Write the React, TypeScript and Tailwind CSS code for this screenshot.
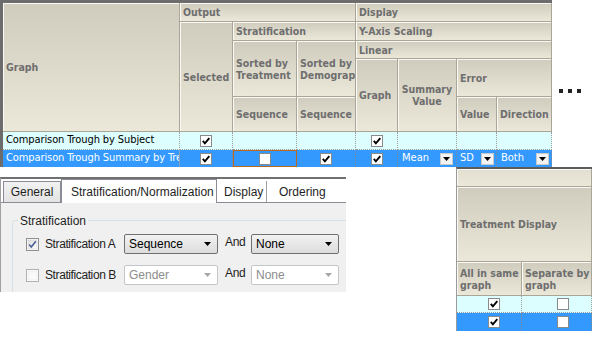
import React from "react";

const H =
  "border-r border-b border-[#a9a698] bg-linear-to-b from-[#cfccbd] to-[#ece8d9] shadow-[inset_1px_1px_0_#faf9f3] text-[10.5px] font-bold text-[#6e6e6e] px-[3px] flex items-center leading-[12px] overflow-hidden whitespace-nowrap";

function GridCheck({ checked }: { checked: boolean }) {
  return (
    <svg width="12" height="12" viewBox="0 0 12 12">
      <rect x="0.5" y="0.5" width="11" height="11" fill="#fff" stroke="#8a8a8a" />
      {checked && <path d="M2.8 5.8 L4.9 8.3 L9.3 3.2" fill="none" stroke="#000" strokeWidth="1.9" />}
    </svg>
  );
}

function DropBtn() {
  return (
    <span className="w-[13px] h-[12px] bg-[#f4f4f4] border border-[#c9c9c9] flex items-center justify-center">
      <svg width="7" height="4" viewBox="0 0 7 4">
        <path d="M0 0H7L3.5 4Z" fill="#000" />
      </svg>
    </span>
  );
}

const D1 = "bg-[#dcfefe] border-r border-dotted border-[#9c9c9c] border-b flex items-center justify-center";
const D2 = "bg-[#3399ff] border-r border-dotted border-[#7a8aa0] flex items-center justify-center";

function Grid() {
  return (
    <div className="border-l-[3px] border-t-[3px] border-[#6c6c6c] grid grid-cols-[177px_53px_64px_59px_42px_59px_40px_55px] grid-rows-[19px_19px_18px_38px_35px_18px_17px]">
      <div className={`${H} col-start-1 row-start-1 row-end-6`}>Graph</div>
      <div className={`${H} col-start-2 col-end-5 row-start-1`}>Output</div>
      <div className={`${H} col-start-5 col-end-9 row-start-1`}>Display</div>
      <div className={`${H} col-start-2 row-start-2 row-end-6`}>Selected</div>
      <div className={`${H} col-start-3 col-end-5 row-start-2`}>Stratification</div>
      <div className={`${H} col-start-5 col-end-9 row-start-2`}>Y-Axis Scaling</div>
      <div className={`${H} col-start-3 row-start-3 row-end-5`}>
        <span>
          Sorted by
          <br />
          Treatment
        </span>
      </div>
      <div className={`${H} col-start-4 row-start-3 row-end-5`}>
        <span>
          Sorted by
          <br />
          Demographics
        </span>
      </div>
      <div className={`${H} col-start-5 col-end-9 row-start-3`}>Linear</div>
      <div className={`${H} col-start-5 row-start-4 row-end-6`}>Graph</div>
      <div className={`${H} col-start-6 row-start-4 row-end-6 justify-center text-center`}>
        <span>
          Summary
          <br />
          Value
        </span>
      </div>
      <div className={`${H} col-start-7 col-end-9 row-start-4`}>Error</div>
      <div className={`${H} col-start-3 row-start-5`}>Sequence</div>
      <div className={`${H} col-start-4 row-start-5`}>Sequence</div>
      <div className={`${H} col-start-7 row-start-5`}>Value</div>
      <div className={`${H} col-start-8 row-start-5`}>Direction</div>

      {/* data row 1 */}
      <div className="row-start-6 col-start-1 bg-[#dcfefe] border-r border-[#a0a0a0] border-b border-b-[#9c9c9c] border-dotted px-[3px] flex items-center text-[11px] tracking-[-0.1px] text-black whitespace-nowrap overflow-hidden">
        Comparison Trough by Subject
      </div>
      <div className={`${D1} row-start-6 col-start-2`}>
        <GridCheck checked />
      </div>
      <div className={`${D1} row-start-6 col-start-3`} />
      <div className={`${D1} row-start-6 col-start-4`} />
      <div className={`${D1} row-start-6 col-start-5`}>
        <GridCheck checked />
      </div>
      <div className={`${D1} row-start-6 col-start-6`} />
      <div className={`${D1} row-start-6 col-start-7`} />
      <div className={`${D1} row-start-6 col-start-8`} />

      {/* data row 2 */}
      <div className="row-start-7 col-start-1 bg-[#3399ff] border-r border-[#8aa0b8] px-[3px] flex items-center text-[11px] tracking-[-0.1px] text-white whitespace-nowrap overflow-hidden">
        Comparison Trough Summary by Treatment
      </div>
      <div className={`${D2} row-start-7 col-start-2`}>
        <GridCheck checked />
      </div>
      <div className="row-start-7 col-start-3 bg-[#3399ff] border border-[#b8691f] flex items-center justify-center">
        <GridCheck checked={false} />
      </div>
      <div className={`${D2} row-start-7 col-start-4`}>
        <GridCheck checked />
      </div>
      <div className={`${D2} row-start-7 col-start-5`}>
        <GridCheck checked />
      </div>
      <div className={`${D2} row-start-7 col-start-6 !justify-between pl-[4px] pr-[3px] text-[11px] text-white`}>
        <span>Mean</span>
        <DropBtn />
      </div>
      <div className={`${D2} row-start-7 col-start-7 !justify-between pl-[3px] pr-[2px] text-[11px] text-white`}>
        <span>SD</span>
        <DropBtn />
      </div>
      <div className={`${D2} row-start-7 col-start-8 !justify-between pl-[4px] pr-[2px] text-[11px] text-white`}>
        <span>Both</span>
        <DropBtn />
      </div>
    </div>
  );
}

function WinCheck({ checked, disabled }: { checked: boolean; disabled?: boolean }) {
  return (
    <svg width="13" height="13" viewBox="0 0 13 13">
      <defs>
        <linearGradient id={disabled ? "cbd" : "cbe"} x1="0" y1="0" x2="1" y2="1">
          <stop offset="0" stopColor={disabled ? "#f4f4f4" : "#dcdcdc"} />
          <stop offset="1" stopColor="#ffffff" />
        </linearGradient>
      </defs>
      <rect x="0.5" y="0.5" width="12" height="12" fill="#fff" stroke={disabled ? "#b1b1b1" : "#8e8f8f"} />
      <rect x="2" y="2" width="9" height="9" fill={`url(#${disabled ? "cbd" : "cbe"})`} stroke={disabled ? "#e2e2e2" : "#c9cbd0"} strokeWidth="0.5" />
      {checked && <path d="M3.2 6.5 L5.3 9 L9.8 3.3" fill="none" stroke="#4a5f97" strokeWidth="1.6" />}
    </svg>
  );
}

function Combo({ text, disabled, w }: { text: string; disabled?: boolean; w: string }) {
  return (
    <div
      className={`${w} h-[20px] rounded-[2px] border flex items-center justify-between pl-[4px] pr-[6px] text-[12px] ${
        disabled
          ? "border-[#c2c6c9] bg-white text-[#8d8d8d]"
          : "border-[#707070] bg-linear-to-b from-[#f2f2f2] to-[#dcdcdc] text-black"
      }`}
    >
      <span>{text}</span>
      <svg width="7" height="4" viewBox="0 0 7 4">
        <path d="M0 0H7L3.5 4Z" fill={disabled ? "#a6a6a6" : "#000"} />
      </svg>
    </div>
  );
}

function TabPanel() {
  return (
    <div className="mt-[10px] w-[346px] h-[115px] flex flex-col border-t-2 border-t-[#707070] border-l border-l-[#a0a0a0] bg-white font-['Liberation_Sans',sans-serif] text-[12px] overflow-hidden">
      <div className="h-[23px] flex items-end shrink-0 text-[12px]">
        <div className="ml-[2px] w-[58px] h-[21px] border border-b-0 border-[#898c95] bg-linear-to-b from-[#f2f2f2] to-[#e3e3e3] flex items-center justify-center text-[#1e1e1e]">
          General
        </div>
        <div className="w-[156px] h-[24px] -mb-px border border-b-0 border-[#898c95] bg-white flex items-center pl-[9px] text-[#1e1e1e] relative z-10">
          Stratification/Normalization
        </div>
        <div className="w-[50px] h-[21px] border-r border-[#a0a0a0] flex items-center pl-[7px] text-[#1e1e1e]">
          Display
        </div>
        <div className="flex-1 h-[21px] flex items-center pl-[12px] text-[#1e1e1e]">Ordering</div>
      </div>
      <div className="flex-1 bg-[#f0f0f0] border-t border-[#898c95] pt-[17px] pl-[11px] overflow-hidden">
        <div className="relative w-[400px] h-[100px] border border-[#d5dfe5] rounded-[3px] pt-[13px]">
          <span className="absolute -top-[9px] left-[5px] px-[2px] bg-[#f0f0f0] text-[#1e1e1e]">Stratification</span>
          <div className="flex items-center h-[20px]">
            <div className="w-[111px] flex items-center pl-[13px]">
              <WinCheck checked />
              <span className="ml-[6px] text-[#1e1e1e] tracking-[-0.4px]">Stratification A</span>
            </div>
            <Combo text="Sequence" w="w-[94px]" />
            <div className="w-[33px] pl-[7px] pb-[4px] text-[#1e1e1e] tracking-[-0.3px]">And</div>
            <Combo text="None" w="w-[88px]" />
          </div>
          <div className="flex items-center h-[20px] mt-[11px]">
            <div className="w-[111px] flex items-center pl-[13px]">
              <WinCheck checked={false} disabled />
              <span className="ml-[6px] text-[#1e1e1e] tracking-[-0.4px]">Stratification B</span>
            </div>
            <Combo text="Gender" w="w-[94px]" disabled />
            <div className="w-[33px] pl-[7px] pb-[4px] text-[#1e1e1e] tracking-[-0.3px]">And</div>
            <Combo text="None" w="w-[88px]" disabled />
          </div>
        </div>
      </div>
    </div>
  );
}

function RightPanel() {
  return (
    <div className="ml-auto w-[136px] border-t-2 border-t-[#5c5c5c] border-l border-l-[#9a9a9a] grid grid-cols-[65px_70px] grid-rows-[18px_75px_34px_17px_18px]">
      <div className={`${H} col-start-1 col-end-3 row-start-1 from-[#e2dfd0]`} />
      <div className={`${H} col-start-1 col-end-3 row-start-2`}>Treatment Display</div>
      <div className={`${H} col-start-1 row-start-3`}>
        <span>
          All in same
          <br />
          graph
        </span>
      </div>
      <div className={`${H} col-start-2 row-start-3`}>
        <span>
          Separate by
          <br />
          graph
        </span>
      </div>
      <div className={`${D1} row-start-4 col-start-1 pl-[10px]`}>
        <GridCheck checked />
      </div>
      <div className={`${D1} row-start-4 col-start-2 pl-[12px]`}>
        <GridCheck checked={false} />
      </div>
      <div className={`${D2} row-start-5 col-start-1 pl-[10px]`}>
        <GridCheck checked />
      </div>
      <div className={`${D2} row-start-5 col-start-2 pl-[12px]`}>
        <GridCheck checked={false} />
      </div>
    </div>
  );
}

export default function App() {
  return (
    <div className="w-[592px] h-[338px] bg-white overflow-hidden font-['DejaVu_Sans_Condensed','DejaVu_Sans',sans-serif]">
      <div className="flex">
        <Grid />
        <div className="ml-[7px] mt-[89px] flex gap-[5px] h-[4px]">
          <span className="w-[4px] h-[4px] bg-[#222]" />
          <span className="w-[4px] h-[4px] bg-[#222]" />
          <span className="w-[4px] h-[4px] bg-[#222]" />
        </div>
      </div>
      <div className="flex items-start">
        <TabPanel />
        <RightPanel />
      </div>
    </div>
  );
}
